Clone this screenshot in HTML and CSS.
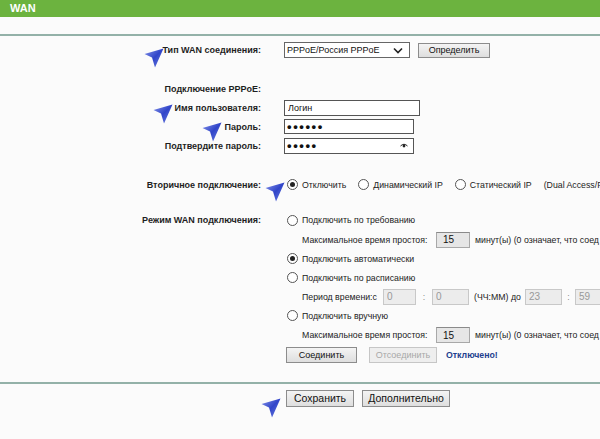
FILE: index.html
```html
<!DOCTYPE html>
<html lang="ru">
<head>
<meta charset="utf-8">
<title>WAN</title>
<link rel="stylesheet" href="styles.css">
</head>
<body>
<div class="header">WAN</div>
<div class="rule rule-top"></div>

<div class="form">
  <div class="row row-type">
    <div class="label">Тип WAN соединения:</div>
    <div class="value">
      <div class="select">
        <span>PPPoE/Россия PPPoE</span>
        <svg class="chev" width="10" height="7" viewBox="0 0 10 7"><path d="M1 1.5 L5 5.5 L9 1.5" fill="none" stroke="#222" stroke-width="1.6"/></svg>
      </div>
      <button class="btn btn-detect">Определить</button>
    </div>
  </div>

  <div class="row row-pppoe">
    <div class="label">Подключение PPPoE:</div>
    <div class="value"></div>
  </div>
  <div class="row">
    <div class="label">Имя пользователя:</div>
    <div class="value"><input class="field f-login" type="text" value="Логин"></div>
  </div>
  <div class="row">
    <div class="label">Пароль:</div>
    <div class="value"><input class="field f-pass" type="password" value="123456"></div>
  </div>
  <div class="row">
    <div class="label">Подтвердите пароль:</div>
    <div class="value">
      <div class="pass-wrap">
        <input class="field f-confirm" type="password" value="12345">
        <svg class="eye" width="8" height="5" viewBox="0 0 8 5"><path d="M0.5 3 Q4 -0.5 7.5 3" fill="none" stroke="#222" stroke-width="1"/><circle cx="4" cy="3" r="1.4" fill="#222"/></svg>
      </div>
    </div>
  </div>

  <div class="row row-second">
    <div class="label">Вторичное подключение:</div>
    <div class="value">
      <label class="opt"><span class="radio checked"></span>Отключить</label>
      <label class="opt"><span class="radio"></span>Динамический IP</label>
      <label class="opt"><span class="radio"></span>Статический IP</label>
      <span class="opt last">(Dual Access/P</span>
    </div>
  </div>

  <div class="row row-mode">
    <div class="label">Режим WAN подключения:</div>
    <div class="value"><label class="opt"><span class="radio"></span>Подключить по требованию</label></div>
  </div>
  <div class="row">
    <div class="label"></div>
    <div class="value sub">
      <span class="sublabel">Максимальное время простоя:</span>
      <input class="small" type="text" value="15">
      <span class="after">минут(ы) (0 означает, что соед</span>
    </div>
  </div>
  <div class="row">
    <div class="label"></div>
    <div class="value"><label class="opt"><span class="radio checked"></span>Подключить автоматически</label></div>
  </div>
  <div class="row">
    <div class="label"></div>
    <div class="value"><label class="opt"><span class="radio"></span>Подключить по расписанию</label></div>
  </div>
  <div class="row">
    <div class="label"></div>
    <div class="value sub">
      <span class="sublabel period">Период времени:с</span>
      <input class="small dis t1" type="text" value="0">
      <span class="colon">:</span>
      <input class="small dis t2" type="text" value="0">
      <span class="hh">(ЧЧ:ММ) до</span>
      <input class="small dis t2" type="text" value="23">
      <span class="colon c2">:</span>
      <input class="small dis t2" type="text" value="59">
    </div>
  </div>
  <div class="row">
    <div class="label"></div>
    <div class="value"><label class="opt"><span class="radio"></span>Подключить вручную</label></div>
  </div>
  <div class="row row-tall">
    <div class="label"></div>
    <div class="value sub">
      <span class="sublabel">Максимальное время простоя:</span>
      <input class="small" type="text" value="15">
      <span class="after">минут(ы) (0 означает, что соед</span>
    </div>
  </div>
  <div class="row">
    <div class="label"></div>
    <div class="value">
      <button class="btn btn-connect">Соединить</button>
      <button class="btn btn-disconnect" disabled>Отсоединить</button>
      <span class="status">Отключено!</span>
    </div>
  </div>
</div>

<div class="rule rule-bottom"></div>

<div class="row row-save">
  <div class="label"></div>
  <div class="value">
    <button class="btn btn-save">Сохранить</button>
    <button class="btn btn-more">Дополнительно</button>
  </div>
</div>

<svg class="arrow a1" width="20" height="20" viewBox="0 0 20 20"><defs><linearGradient id="g" x1="0" y1="0" x2="1" y2="1"><stop offset="0" stop-color="#8796ea"/><stop offset="0.5" stop-color="#3145c9"/><stop offset="1" stop-color="#6c7fe0"/></linearGradient></defs><path d="M19.5 0.5 L0.5 6 L8 9.5 L11 19.5 Z" fill="url(#g)"/></svg>
<svg class="arrow a2" width="20" height="20" viewBox="0 0 20 20"><path d="M19.5 0.5 L0.5 6 L8 9.5 L11 19.5 Z" fill="url(#g)"/></svg>
<svg class="arrow a3" width="20" height="20" viewBox="0 0 20 20"><path d="M19.5 0.5 L0.5 6 L8 9.5 L11 19.5 Z" fill="url(#g)"/></svg>
<svg class="arrow a4" width="20" height="20" viewBox="0 0 20 20"><path d="M19.5 0.5 L0.5 6 L8 9.5 L11 19.5 Z" fill="url(#g)"/></svg>
<svg class="arrow a5" width="20" height="20" viewBox="0 0 20 20"><path d="M19.5 0.5 L0.5 6 L8 9.5 L11 19.5 Z" fill="url(#g)"/></svg>
</body>
</html>
```

FILE: styles.css
```css
html, body {
  margin: 0;
  padding: 0;
}
body {
  position: relative;
  width: 600px;
  height: 439px;
  overflow: hidden;
  background: #fbfbfb;
  font-family: "Liberation Sans", Arial, sans-serif;
  font-size: 9px;
  color: #222;
}
.header {
  height: 17px;
  line-height: 17px;
  background: #6cb33f;
  color: #fff;
  font-weight: bold;
  font-size: 11px;
  padding-left: 10px;
}
.rule {
  height: 2px;
  background: #93b1a8;
}
.rule-top {
  margin-top: 17px;
}
.form {
  padding-top: 4px;
}
.row {
  display: grid;
  grid-template-columns: 261px 1fr;
  column-gap: 23px;
  align-items: center;
  height: 19px;
  white-space: nowrap;
}
.label {
  text-align: right;
  font-weight: bold;
  color: #1e1e1e;
}
.value {
  display: flex;
  align-items: center;
  min-width: 0;
  font-size: 8.75px;
}
.row-type {
  height: 20px;
}
.row-pppoe {
  margin-top: 19px;
}
.row-second {
  margin-top: 20px;
}
.row-mode {
  margin-top: 16px;
  height: 20px;
}
.row-tall {
  height: 20px;
}
.select {
  box-sizing: border-box;
  width: 126px;
  height: 16px;
  border: 1px solid #666;
  background: #fff;
  display: flex;
  align-items: center;
  justify-content: space-between;
  padding: 0 6px 0 2px;
  font-size: 9px;
  color: #111;
}
.btn {
  box-sizing: border-box;
  height: 16px;
  padding: 0;
  border: 1px solid #8c8c8c;
  background: linear-gradient(#f4f4f4, #dedede);
  font-family: "Liberation Sans", Arial, sans-serif;
  font-size: 9px;
  color: #111;
}
.btn-detect {
  width: 72px;
  margin-left: 8px;
  height: 15px;
}
.field {
  box-sizing: border-box;
  height: 16px;
  border: 1px solid #555;
  background: #fff;
  padding: 0 3px;
  margin: 0;
  font-family: "Liberation Sans", Arial, sans-serif;
  font-size: 9px;
  color: #111;
  outline: none;
}
.f-login {
  width: 136px;
}
.f-pass {
  width: 130px;
  height: 15px;
}
.f-confirm {
  width: 130px;
}
input[type="password"] {
  font-size: 13px;
  letter-spacing: 1.6px;
  font-weight: bold;
  padding-left: 2px;
}
.pass-wrap {
  position: relative;
  width: 130px;
  height: 16px;
}
.eye {
  position: absolute;
  right: 6px;
  top: 5px;
}
.opt {
  display: inline-flex;
  align-items: center;
  margin-right: 12px;
  color: #222;
}
.opt:first-child {
  margin-left: 3px;
}
.opt.last {
  margin-right: 0;
}
.radio {
  box-sizing: border-box;
  width: 11px;
  height: 11px;
  border: 1px solid #555;
  border-radius: 50%;
  background: #fff;
  margin-right: 4px;
  position: relative;
  flex: none;
}
.radio.checked::after {
  content: "";
  position: absolute;
  left: 2px;
  top: 2px;
  width: 5px;
  height: 5px;
  border-radius: 50%;
  background: #222;
}
.sub {
  padding-left: 18px;
}
.sublabel {
  width: 134px;
  flex: none;
}
.sublabel.period {
  width: 81px;
}
.small {
  box-sizing: border-box;
  width: 34px;
  height: 16px;
  margin: 0;
  border: 1px solid #a8a8a8;
  border-top-color: #8a8a8a;
  background: #e6e6e6;
  padding: 0 0 0 6px;
  font-family: "Liberation Sans", Arial, sans-serif;
  font-size: 10px;
  color: #111;
  flex: none;
}
.small.dis {
  color: #999;
  background: #ececec;
  border-color: #c8c8c8;
  padding-left: 3px;
}
.small.t1 {
  width: 33px;
}
.small.t2 {
  width: 37px;
}
.colon {
  width: 16px;
  text-align: center;
  color: #888;
  flex: none;
}
.colon.c2 {
  width: 13px;
}
.hh {
  width: 51px;
  margin-left: 5px;
  flex: none;
}
.after {
  margin-left: 5px;
}
.btn-connect {
  width: 71px;
  margin-left: 2px;
}
.btn-disconnect {
  width: 68px;
  margin-left: 12px;
  color: #a8a8a8;
  border-color: #c6c6c6;
  background: #eeeeee;
}
.status {
  margin-left: 9px;
  font-weight: bold;
  color: #1d3f8e;
}
.rule-bottom {
  margin-top: 18px;
}
.row-save {
  margin-top: 5px;
  height: 18px;
}
.btn-save {
  width: 68px;
  margin-left: 2px;
  height: 17px;
  font-size: 10.5px;
}
.btn-more {
  width: 88px;
  margin-left: 8px;
  height: 17px;
  font-size: 10.5px;
}
.arrow {
  position: absolute;
}
.a1 { left: 144px; top: 48px; }
.a2 { left: 153px; top: 104px; }
.a3 { left: 202px; top: 122px; }
.a4 { left: 265px; top: 182px; }
.a5 { left: 261px; top: 398px; }
```
